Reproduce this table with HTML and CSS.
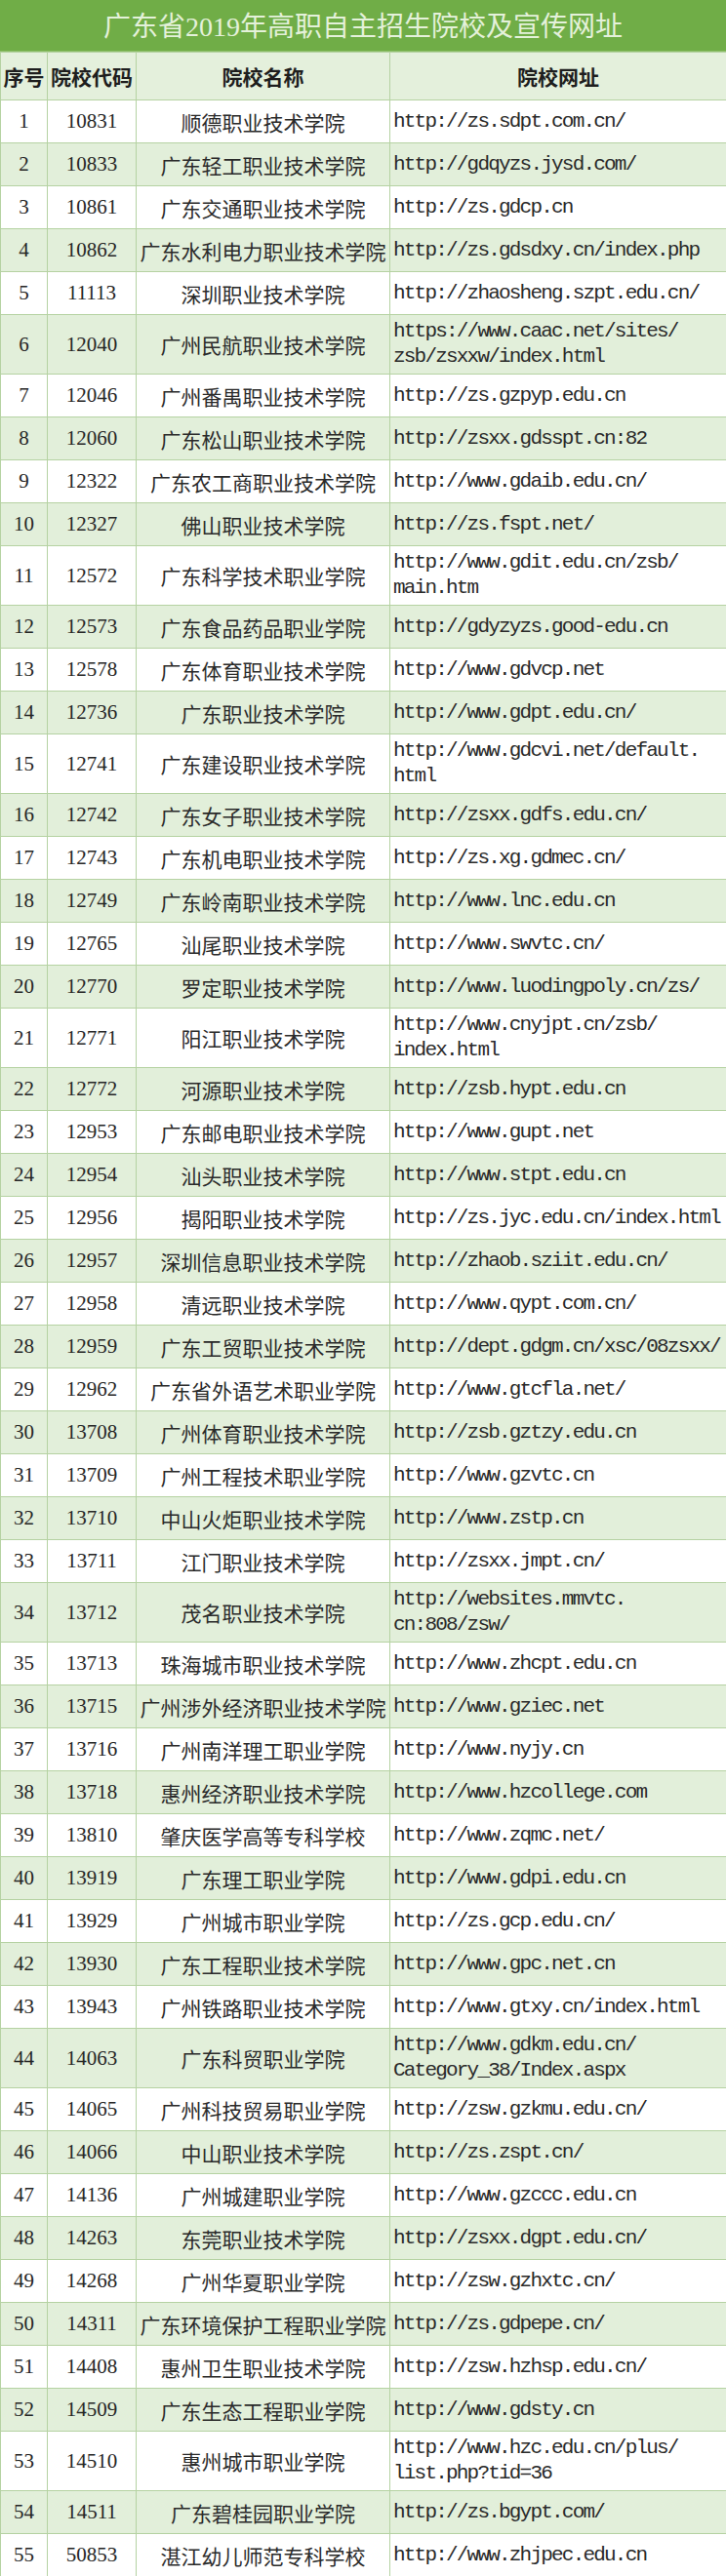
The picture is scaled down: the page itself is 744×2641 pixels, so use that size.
FILE: index.html
```html
<!DOCTYPE html>
<html lang="zh-CN">
<head>
<meta charset="utf-8">
<title>广东省2019年高职自主招生院校及宣传网址</title>
<link rel="stylesheet" href="styles.css">
</head>
<body>
<div class="sheet">
  <div class="title">广东省2019年高职自主招生院校及宣传网址</div>
  <table class="grid">
    <colgroup>
      <col class="c-no"><col class="c-code"><col class="c-name"><col class="c-url">
    </colgroup>
    <thead>
      <tr class="head"><th>序号</th><th>院校代码</th><th>院校名称</th><th>院校网址</th></tr>
    </thead>
    <tbody>
      <tr><td class="num">1</td><td class="num">10831</td><td class="name">顺德职业技术学院</td><td class="url">http://zs.sdpt.com.cn/</td></tr>
      <tr><td class="num">2</td><td class="num">10833</td><td class="name">广东轻工职业技术学院</td><td class="url">http://gdqyzs.jysd.com/</td></tr>
      <tr><td class="num">3</td><td class="num">10861</td><td class="name">广东交通职业技术学院</td><td class="url">http://zs.gdcp.cn</td></tr>
      <tr><td class="num">4</td><td class="num">10862</td><td class="name">广东水利电力职业技术学院</td><td class="url">http://zs.gdsdxy.cn/index.php</td></tr>
      <tr><td class="num">5</td><td class="num">11113</td><td class="name">深圳职业技术学院</td><td class="url">http://zhaosheng.szpt.edu.cn/</td></tr>
      <tr class="tall"><td class="num">6</td><td class="num">12040</td><td class="name">广州民航职业技术学院</td><td class="url">https://www.caac.net/sites/<br>zsb/zsxxw/index.html</td></tr>
      <tr><td class="num">7</td><td class="num">12046</td><td class="name">广州番禺职业技术学院</td><td class="url">http://zs.gzpyp.edu.cn</td></tr>
      <tr><td class="num">8</td><td class="num">12060</td><td class="name">广东松山职业技术学院</td><td class="url">http://zsxx.gdsspt.cn:82</td></tr>
      <tr><td class="num">9</td><td class="num">12322</td><td class="name">广东农工商职业技术学院</td><td class="url">http://www.gdaib.edu.cn/</td></tr>
      <tr><td class="num">10</td><td class="num">12327</td><td class="name">佛山职业技术学院</td><td class="url">http://zs.fspt.net/</td></tr>
      <tr class="tall"><td class="num">11</td><td class="num">12572</td><td class="name">广东科学技术职业学院</td><td class="url">http://www.gdit.edu.cn/zsb/<br>main.htm</td></tr>
      <tr><td class="num">12</td><td class="num">12573</td><td class="name">广东食品药品职业学院</td><td class="url">http://gdyzyzs.good-edu.cn</td></tr>
      <tr><td class="num">13</td><td class="num">12578</td><td class="name">广东体育职业技术学院</td><td class="url">http://www.gdvcp.net</td></tr>
      <tr><td class="num">14</td><td class="num">12736</td><td class="name">广东职业技术学院</td><td class="url">http://www.gdpt.edu.cn/</td></tr>
      <tr class="tall"><td class="num">15</td><td class="num">12741</td><td class="name">广东建设职业技术学院</td><td class="url">http://www.gdcvi.net/default.<br>html</td></tr>
      <tr><td class="num">16</td><td class="num">12742</td><td class="name">广东女子职业技术学院</td><td class="url">http://zsxx.gdfs.edu.cn/</td></tr>
      <tr><td class="num">17</td><td class="num">12743</td><td class="name">广东机电职业技术学院</td><td class="url">http://zs.xg.gdmec.cn/</td></tr>
      <tr><td class="num">18</td><td class="num">12749</td><td class="name">广东岭南职业技术学院</td><td class="url">http://www.lnc.edu.cn</td></tr>
      <tr><td class="num">19</td><td class="num">12765</td><td class="name">汕尾职业技术学院</td><td class="url">http://www.swvtc.cn/</td></tr>
      <tr><td class="num">20</td><td class="num">12770</td><td class="name">罗定职业技术学院</td><td class="url">http://www.luodingpoly.cn/zs/</td></tr>
      <tr class="tall"><td class="num">21</td><td class="num">12771</td><td class="name">阳江职业技术学院</td><td class="url">http://www.cnyjpt.cn/zsb/<br>index.html</td></tr>
      <tr><td class="num">22</td><td class="num">12772</td><td class="name">河源职业技术学院</td><td class="url">http://zsb.hypt.edu.cn</td></tr>
      <tr><td class="num">23</td><td class="num">12953</td><td class="name">广东邮电职业技术学院</td><td class="url">http://www.gupt.net</td></tr>
      <tr><td class="num">24</td><td class="num">12954</td><td class="name">汕头职业技术学院</td><td class="url">http://www.stpt.edu.cn</td></tr>
      <tr><td class="num">25</td><td class="num">12956</td><td class="name">揭阳职业技术学院</td><td class="url">http://zs.jyc.edu.cn/index.html</td></tr>
      <tr><td class="num">26</td><td class="num">12957</td><td class="name">深圳信息职业技术学院</td><td class="url">http://zhaob.sziit.edu.cn/</td></tr>
      <tr><td class="num">27</td><td class="num">12958</td><td class="name">清远职业技术学院</td><td class="url">http://www.qypt.com.cn/</td></tr>
      <tr><td class="num">28</td><td class="num">12959</td><td class="name">广东工贸职业技术学院</td><td class="url">http://dept.gdgm.cn/xsc/08zsxx/</td></tr>
      <tr><td class="num">29</td><td class="num">12962</td><td class="name">广东省外语艺术职业学院</td><td class="url">http://www.gtcfla.net/</td></tr>
      <tr><td class="num">30</td><td class="num">13708</td><td class="name">广州体育职业技术学院</td><td class="url">http://zsb.gztzy.edu.cn</td></tr>
      <tr><td class="num">31</td><td class="num">13709</td><td class="name">广州工程技术职业学院</td><td class="url">http://www.gzvtc.cn</td></tr>
      <tr><td class="num">32</td><td class="num">13710</td><td class="name">中山火炬职业技术学院</td><td class="url">http://www.zstp.cn</td></tr>
      <tr><td class="num">33</td><td class="num">13711</td><td class="name">江门职业技术学院</td><td class="url">http://zsxx.jmpt.cn/</td></tr>
      <tr class="tall"><td class="num">34</td><td class="num">13712</td><td class="name">茂名职业技术学院</td><td class="url">http://websites.mmvtc.<br>cn:808/zsw/</td></tr>
      <tr><td class="num">35</td><td class="num">13713</td><td class="name">珠海城市职业技术学院</td><td class="url">http://www.zhcpt.edu.cn</td></tr>
      <tr><td class="num">36</td><td class="num">13715</td><td class="name">广州涉外经济职业技术学院</td><td class="url">http://www.gziec.net</td></tr>
      <tr><td class="num">37</td><td class="num">13716</td><td class="name">广州南洋理工职业学院</td><td class="url">http://www.nyjy.cn</td></tr>
      <tr><td class="num">38</td><td class="num">13718</td><td class="name">惠州经济职业技术学院</td><td class="url">http://www.hzcollege.com</td></tr>
      <tr><td class="num">39</td><td class="num">13810</td><td class="name">肇庆医学高等专科学校</td><td class="url">http://www.zqmc.net/</td></tr>
      <tr><td class="num">40</td><td class="num">13919</td><td class="name">广东理工职业学院</td><td class="url">http://www.gdpi.edu.cn</td></tr>
      <tr><td class="num">41</td><td class="num">13929</td><td class="name">广州城市职业学院</td><td class="url">http://zs.gcp.edu.cn/</td></tr>
      <tr><td class="num">42</td><td class="num">13930</td><td class="name">广东工程职业技术学院</td><td class="url">http://www.gpc.net.cn</td></tr>
      <tr><td class="num">43</td><td class="num">13943</td><td class="name">广州铁路职业技术学院</td><td class="url">http://www.gtxy.cn/index.html</td></tr>
      <tr class="tall"><td class="num">44</td><td class="num">14063</td><td class="name">广东科贸职业学院</td><td class="url">http://www.gdkm.edu.cn/<br>Category_38/Index.aspx</td></tr>
      <tr><td class="num">45</td><td class="num">14065</td><td class="name">广州科技贸易职业学院</td><td class="url">http://zsw.gzkmu.edu.cn/</td></tr>
      <tr><td class="num">46</td><td class="num">14066</td><td class="name">中山职业技术学院</td><td class="url">http://zs.zspt.cn/</td></tr>
      <tr><td class="num">47</td><td class="num">14136</td><td class="name">广州城建职业学院</td><td class="url">http://www.gzccc.edu.cn</td></tr>
      <tr><td class="num">48</td><td class="num">14263</td><td class="name">东莞职业技术学院</td><td class="url">http://zsxx.dgpt.edu.cn/</td></tr>
      <tr><td class="num">49</td><td class="num">14268</td><td class="name">广州华夏职业学院</td><td class="url">http://zsw.gzhxtc.cn/</td></tr>
      <tr><td class="num">50</td><td class="num">14311</td><td class="name">广东环境保护工程职业学院</td><td class="url">http://zs.gdpepe.cn/</td></tr>
      <tr><td class="num">51</td><td class="num">14408</td><td class="name">惠州卫生职业技术学院</td><td class="url">http://zsw.hzhsp.edu.cn/</td></tr>
      <tr><td class="num">52</td><td class="num">14509</td><td class="name">广东生态工程职业学院</td><td class="url">http://www.gdsty.cn</td></tr>
      <tr class="tall"><td class="num">53</td><td class="num">14510</td><td class="name">惠州城市职业学院</td><td class="url">http://www.hzc.edu.cn/plus/<br>list.php?tid=36</td></tr>
      <tr><td class="num">54</td><td class="num">14511</td><td class="name">广东碧桂园职业学院</td><td class="url">http://zs.bgypt.com/</td></tr>
      <tr><td class="num">55</td><td class="num">50853</td><td class="name">湛江幼儿师范专科学校</td><td class="url">http://www.zhjpec.edu.cn</td></tr>
    </tbody>
  </table>
</div>
</body>
</html>
```

FILE: styles.css
```css
html, body {
  margin: 0;
  padding: 0;
  background: #ffffff;
}

.sheet {
  width: 744px;
  color: #262626;
  font-family: "Liberation Serif", "Noto Sans CJK SC", serif;
}

.title {
  height: 53px;
  box-sizing: border-box;
  background: #70ad47;
  color: #e4f1da;
  font-size: 28px;
  line-height: 56px;
  text-align: center;
  white-space: nowrap;
  border-bottom: 1px solid #8fbf6c;
}

.grid {
  width: 744px;
  border-collapse: collapse;
  table-layout: fixed;
}

.c-no { width: 48px; }
.c-code { width: 91px; }
.c-name { width: 260px; }
.c-url { width: 345px; }

.grid th,
.grid td {
  border: 1px solid #b5d2a2;
  padding: 0;
  vertical-align: middle;
  overflow: hidden;
}

.grid tr { height: 44px; }
.grid tr.tall { height: 61px; }
.grid tr.head { height: 49px; background: #e4f0dc; }

.grid th {
  font-family: "Noto Sans CJK SC", sans-serif;
  font-weight: 700;
  font-size: 21px;
  color: #1e1e1e;
  text-align: center;
  white-space: nowrap;
}

.grid tbody tr:nth-child(even) { background: #e2efda; }

.num {
  font-family: "Liberation Serif", serif;
  font-size: 21px;
  text-align: center;
}

.name {
  font-family: "Noto Sans CJK SC", sans-serif;
  font-weight: 400;
  font-size: 21px;
  text-align: center;
  white-space: nowrap;
  color: #2a2a2a;
}

.url {
  font-family: "Liberation Mono", monospace;
  font-size: 21px;
  letter-spacing: -1.8px;
  line-height: 26px;
  text-align: left;
  padding-left: 3px !important;
  white-space: nowrap;
  color: #2a2a2a;
}
```
